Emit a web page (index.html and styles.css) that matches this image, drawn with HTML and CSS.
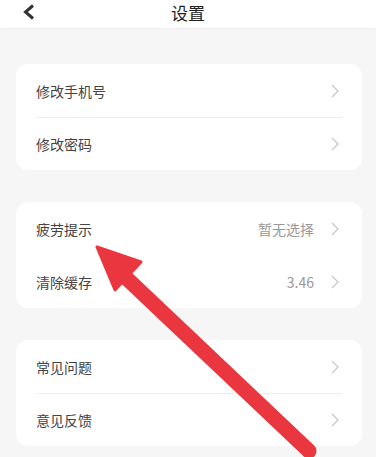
FILE: index.html
```html
<!DOCTYPE html>
<html lang="zh-CN">
<head>
  <meta charset="UTF-8">
  <title>设置</title>
  <link rel="stylesheet" href="styles.css">
</head>
<body>

  <div class="header">
    <span class="back">
      <svg width="14" height="16" viewBox="0 0 14 16"><path d="M11 1.5 L3.5 8 L11 14.5" fill="none" stroke="#333" stroke-width="3" stroke-linejoin="miter"/></svg>
    </span>
    <h1>设置</h1>
  </div>

  <div class="page">
    <!-- 账号 -->
    <div class="card">
      <div class="row">
        <span class="label">修改手机号</span>
        <svg class="arrow" width="8" height="14" viewBox="0 0 8 14"><path d="M1 1 L7 7 L1 13" fill="none" stroke="#c8c8c8" stroke-width="1.3"/></svg>
      </div>
      <div class="row">
        <span class="label">修改密码</span>
        <svg class="arrow" width="8" height="14" viewBox="0 0 8 14"><path d="M1 1 L7 7 L1 13" fill="none" stroke="#c8c8c8" stroke-width="1.3"/></svg>
      </div>
    </div>

    <!-- 通用 -->
    <div class="card">
      <div class="row plain">
        <span class="label">疲劳提示</span>
        <span class="value">暂无选择</span>
        <svg class="arrow" width="8" height="14" viewBox="0 0 8 14"><path d="M1 1 L7 7 L1 13" fill="none" stroke="#c8c8c8" stroke-width="1.3"/></svg>
      </div>
      <div class="row plain">
        <span class="label">清除缓存</span>
        <span class="value">3.46</span>
        <svg class="arrow" width="8" height="14" viewBox="0 0 8 14"><path d="M1 1 L7 7 L1 13" fill="none" stroke="#c8c8c8" stroke-width="1.3"/></svg>
      </div>
    </div>

    <!-- 帮助 -->
    <div class="card">
      <div class="row">
        <span class="label">常见问题</span>
        <svg class="arrow" width="8" height="14" viewBox="0 0 8 14"><path d="M1 1 L7 7 L1 13" fill="none" stroke="#c8c8c8" stroke-width="1.3"/></svg>
      </div>
      <div class="row">
        <span class="label">意见反馈</span>
        <svg class="arrow" width="8" height="14" viewBox="0 0 8 14"><path d="M1 1 L7 7 L1 13" fill="none" stroke="#c8c8c8" stroke-width="1.3"/></svg>
      </div>
    </div>
  </div>

  <!-- 标注箭头 -->
  <svg class="pointer" width="376" height="457" viewBox="0 0 376 457">
    <line x1="120" y1="272" x2="309" y2="451" stroke="#e9363f" stroke-width="15" stroke-linecap="round"/>
    <polygon points="97,247 141,262 115,290" fill="#e9363f" stroke="#e9363f" stroke-width="3" stroke-linejoin="round"/>
  </svg>

</body>
</html>
```

FILE: styles.css
```css
body {
  font-family: "Noto Sans CJK SC", "Liberation Sans", sans-serif;
  background-color: #f6f6f6;
  color: #333;
  margin: 0;
  padding: 0;
  width: 376px;
  height: 457px;
  overflow: hidden;
}
.header {
  height: 28px;
  background-color: #fff;
  display: flex;
  align-items: center;
  justify-content: center;
  box-shadow: 0 1px 2px rgba(0, 0, 0, 0.03);
}
.header h1 {
  font-size: 17px;
  font-weight: normal;
  margin: 0;
  margin-top: -4px;
  color: #222;
}
.back {
  position: absolute;
  left: 22px;
  top: 4px;
  display: flex;
}
.page {
  padding: 36px 14px 0 16px;
  display: flex;
  flex-direction: column;
  gap: 32px;
}
.card {
  background-color: #fff;
  border-radius: 12px;
  padding: 0 20px;
}
.row {
  height: 53px;
  display: flex;
  align-items: center;
  font-size: 14px;
}
.row + .row {
  box-shadow: inset 0 1px 0 #eee;
}
.row.plain + .row.plain {
  box-shadow: none;
}
.label {
  flex: 1;
  color: #444;
}
.value {
  color: #999;
  margin-right: 17px;
}
.arrow {
  margin-right: 3px;
}
.pointer {
  position: absolute;
  left: 0;
  top: 0;
}
```
